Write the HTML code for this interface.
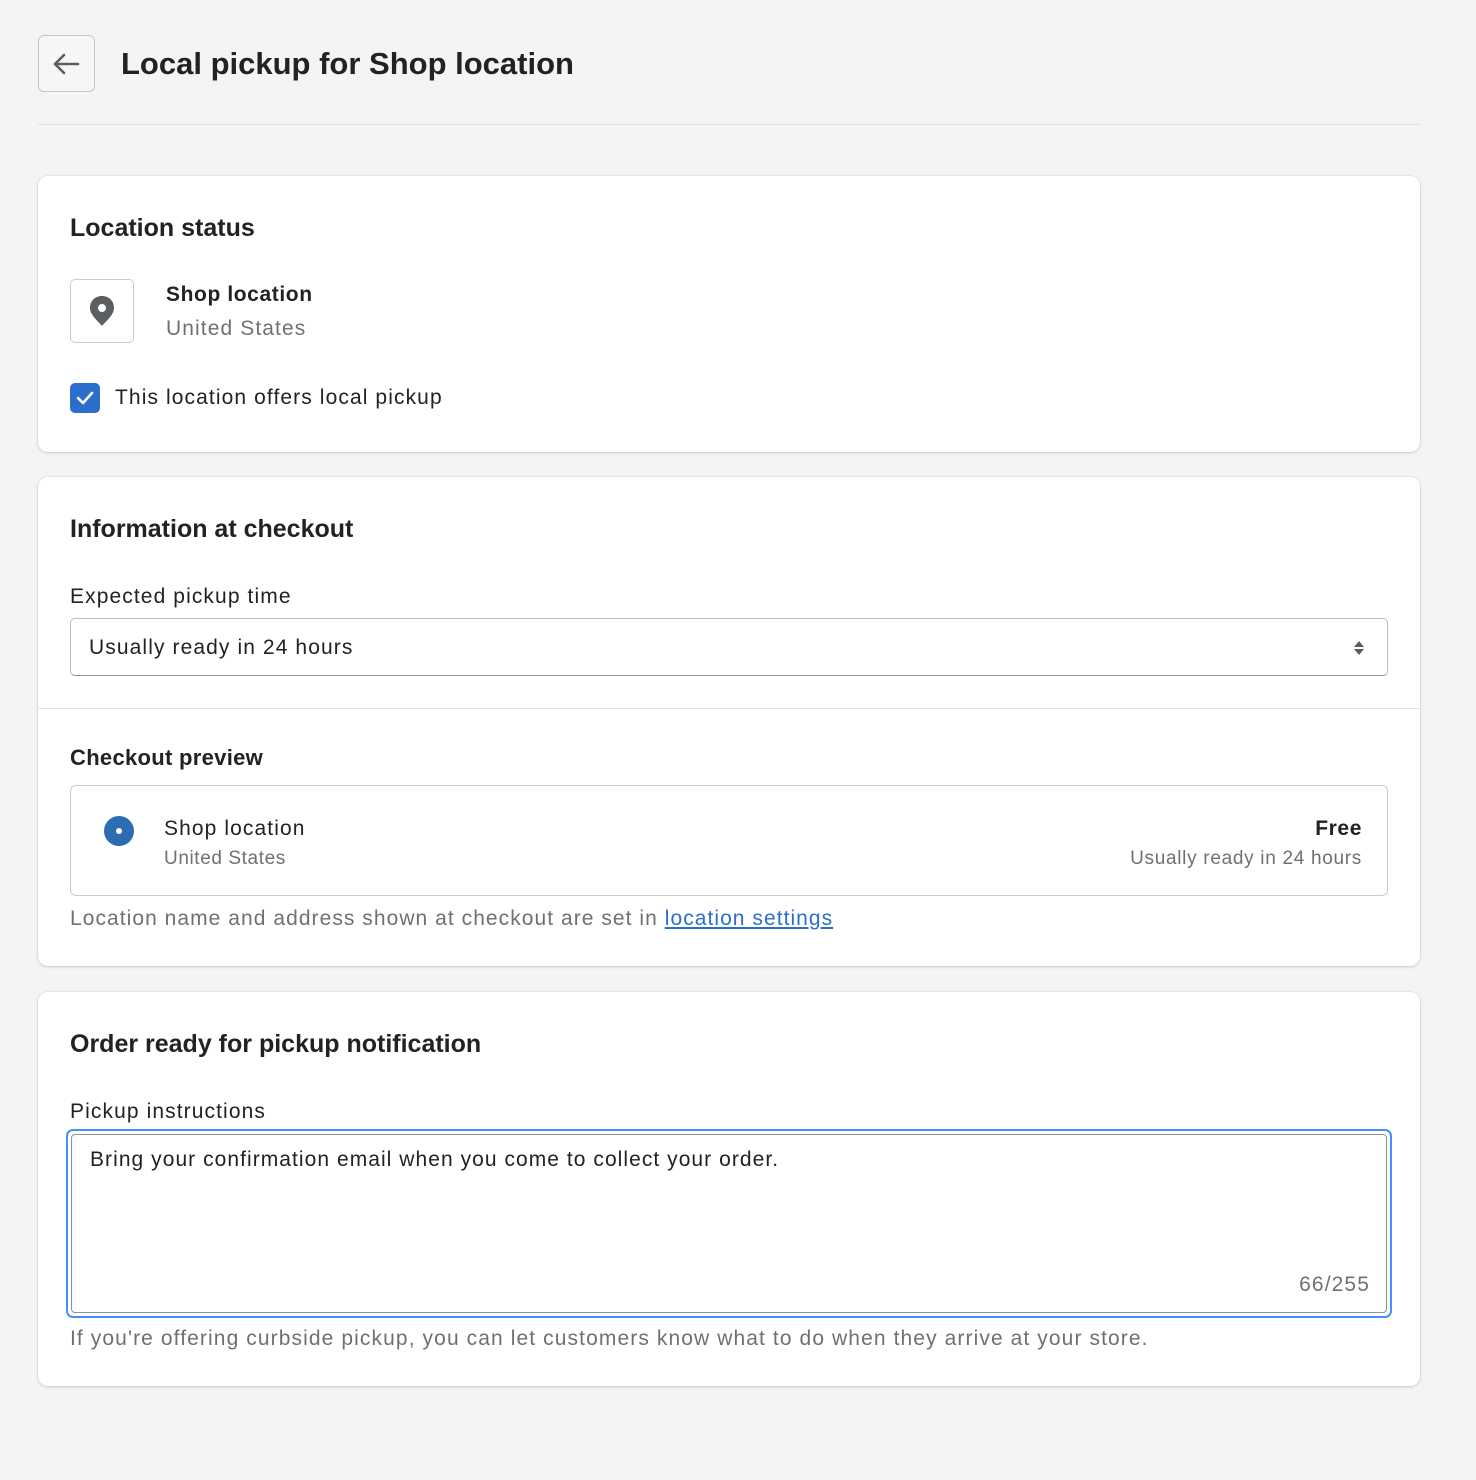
<!DOCTYPE html>
<html><head><style>
*{box-sizing:border-box;margin:0;padding:0}
body{width:1476px;height:1480px;background:#f4f4f6;font-family:"Liberation Sans",sans-serif;color:#202223;position:relative;overflow:hidden}
.abs{position:absolute}
.card{position:absolute;left:38px;width:1382px;background:#fff;border-radius:10px;box-shadow:0 1px 3px rgba(0,0,0,.15),0 0 0 1px rgba(0,0,0,.03)}
.h{font-size:25px;font-weight:bold;letter-spacing:0}
.t{font-size:21px;letter-spacing:1.1px}
.s{font-size:19px;letter-spacing:0.6px}
.g{color:#6d7175}
</style></head><body>
<div class="abs" style="left:38px;top:35px;width:57px;height:57px;border:1px solid #c4c6c9;border-radius:6px;background:#f6f6f7">
<svg width="57" height="57" viewBox="0 0 57 57" style="position:absolute;left:-1px;top:-1px"><path d="M40 29H17M26 20l-9 9 9 9" stroke="#5c5f62" stroke-width="2.6" fill="none" stroke-linecap="round" stroke-linejoin="round"/></svg></div>
<div class="abs" style="left:121px;top:46px;font-size:31px;font-weight:bold">Local pickup for Shop location</div>
<div class="abs" style="left:38px;top:124px;width:1382px;height:1px;background:#dfe0e2"></div>

<div class="card" style="top:176px;height:276px">
<div class="abs h" style="left:32px;top:38px">Location status</div>
<div class="abs" style="left:32px;top:103px;width:64px;height:64px;border:1px solid #c9cccf;border-radius:5px">
<svg width="64" height="64" viewBox="0 0 64 64" style="position:absolute;left:-1px;top:-1px"><path d="M32 17c-7 0-12 5-12 12 0 7 8 13 12 18 4-5 12-11 12-18 0-7-5-12-12-12z" fill="#5c5f62"/><circle cx="32" cy="29" r="4" fill="#fff"/></svg></div>
<div class="abs" style="left:128px;top:107px;font-weight:bold;font-size:21px;letter-spacing:0.6px">Shop location</div>
<div class="abs t g" style="left:128px;top:141px">United States</div>
<div class="abs" style="left:32px;top:207px;width:30px;height:30px;background:#2c6ecb;border-radius:5px">
<svg width="30" height="30"><path d="M8 15l5 5 9-10" stroke="#fff" stroke-width="2.6" fill="none" stroke-linecap="round" stroke-linejoin="round"/></svg></div>
<div class="abs t" style="left:77px;top:210px">This location offers local pickup</div>
</div>

<div class="card" style="top:477px;height:489px">
<div class="abs h" style="left:32px;top:38px">Information at checkout</div>
<div class="abs t" style="left:32px;top:108px">Expected pickup time</div>
<div class="abs" style="left:32px;top:141px;width:1318px;height:58px;border:1px solid #babfc3;border-bottom-color:#8c9196;border-radius:5px">
<div class="abs t" style="left:18px;top:17px">Usually ready in 24 hours</div>
<svg class="abs" style="right:22px;top:19px" width="12" height="20"><path d="M6 3l5 6H1zM6 17l5-6H1z" fill="#5c5f62"/></svg></div>
<div class="abs" style="left:0;top:231px;width:1382px;height:1px;background:#e1e3e5"></div>
<div class="abs" style="left:32px;top:268px;font-size:22px;font-weight:bold;letter-spacing:0.3px">Checkout preview</div>
<div class="abs" style="left:32px;top:308px;width:1318px;height:111px;border:1px solid #c9cccf;border-radius:6px">
<div class="abs" style="left:33px;top:30px;width:30px;height:30px;border-radius:50%;background:#2c6db2"><div class="abs" style="left:12px;top:12px;width:6px;height:6px;border-radius:50%;background:#fff"></div></div>
<div class="abs t" style="left:93px;top:31px">Shop location</div>
<div class="abs s g" style="left:93px;top:62px">United States</div>
<div class="abs" style="right:25px;top:31px;font-weight:bold;font-size:21px;letter-spacing:0.6px">Free</div>
<div class="abs s g" style="right:25px;top:62px;letter-spacing:0.7px">Usually ready in 24 hours</div>
</div>
<div class="abs t g" style="left:32px;top:430px;letter-spacing:1.05px">Location name and address shown at checkout are set in <span style="color:#2c6ecb;text-decoration:underline">location settings</span></div>
</div>

<div class="card" style="top:992px;height:394px">
<div class="abs h" style="left:32px;top:38px">Order ready for pickup notification</div>
<div class="abs t" style="left:32px;top:108px">Pickup instructions</div>
<div class="abs" style="left:28px;top:137px;width:1326px;height:189px;border:2px solid #458fff;border-radius:7px">
<div class="abs" style="left:3px;top:3px;right:3px;bottom:3px;border:1px solid #8c9196;border-radius:4px"></div>
<div class="abs t" style="left:22px;top:17px;letter-spacing:1.05px">Bring your confirmation email when you come to collect your order.</div>
<div class="abs t g" style="right:20px;top:142px">66/255</div>
</div>
<div class="abs t g" style="left:32px;top:335px">If you're offering curbside pickup, you can let customers know what to do when they arrive at your store.</div>
</div>
</body></html>
